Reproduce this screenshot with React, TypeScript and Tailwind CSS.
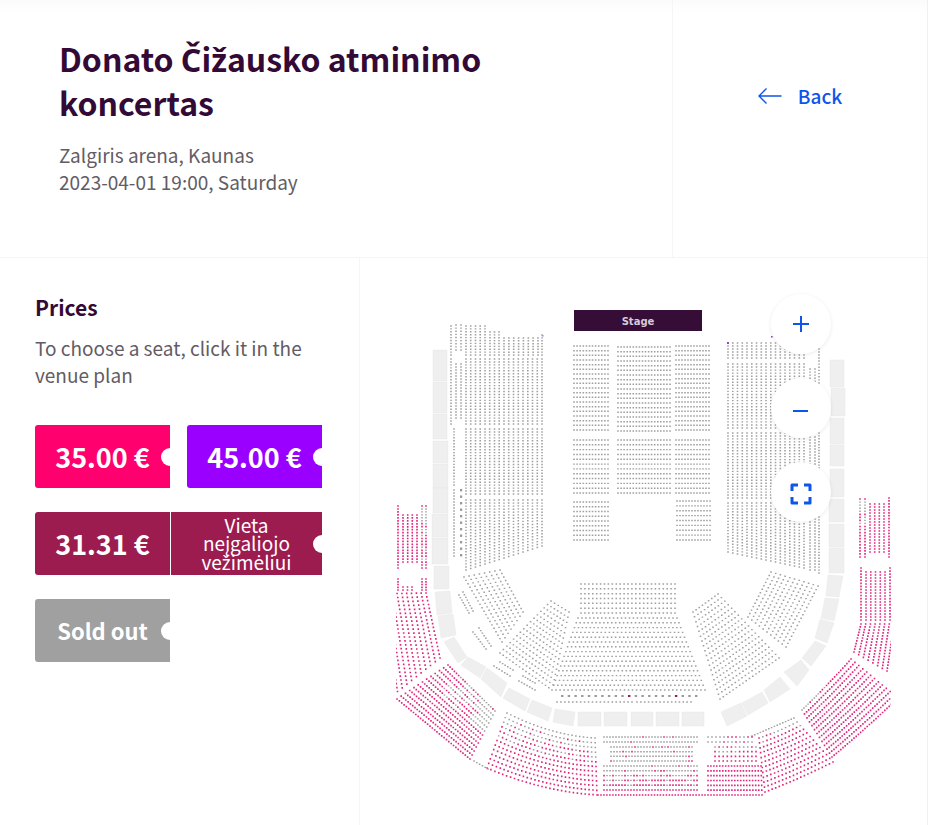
import type { ReactNode } from 'react';
import clsx from 'clsx';

type Point = [number, number];
type Tone = 'free' | 'taken';

interface Block {
    // first row of seats and last row of seats, the rest is interpolated
    first: [number, number, number, number];
    last?: [number, number, number, number];
    rows?: number;
    step?: number;
    sag?: number;
    // chance (0..1) that a seat is still available; u runs along the row, v across rows
    free?: (u: number, v: number) => number;
}

const FONT = "font-['Noto_Sans_CJK_SC','Noto_Sans',sans-serif]";

const always = () => 1;

// Vertical rows that share the same top and bottom
const columns = (x1: number, x2: number, top: number, bottom: number, rows: number, free?: Block['free']): Block => ({
    first: [x1, top, x1, bottom], last: [x2, top, x2, bottom], rows, step: 3, free,
});

const lines = (x1: number, x2: number, top: number, bottom: number, rows: number, step = 3, free?: Block['free']): Block => ({
    first: [x1, top, x2, top], last: [x1, bottom, x2, bottom], rows, step, free,
});

const BLOCKS: Block[] = [
    // floor, left side
    columns(451, 451, 326, 355, 1),
    columns(456, 461, 325, 350, 2),
    columns(466, 485, 326, 355, 5),
    columns(490, 499, 332, 355, 3),
    columns(504, 538, 338, 355, 8),
    columns(542, 542, 335, 355, 1),
    columns(451, 451, 359, 424, 1),
    columns(456, 461, 364, 418, 2),
    columns(466, 542, 359, 424, 17),
    columns(454, 454, 429, 485, 1),
    columns(466, 542, 429, 494, 17),
    columns(454, 454, 490, 556, 1),
    { first: [466, 500, 466, 570], last: [542, 500, 542, 546], rows: 17, step: 3 },

    // floor, centre
    lines(574, 608, 346, 430, 19),
    lines(618, 670, 347, 431, 19),
    lines(676, 709, 346, 430, 19),
    lines(574, 608, 440, 493, 12),
    lines(618, 670, 440, 493, 12),
    lines(676, 709, 440, 493, 12),
    lines(574, 608, 502, 540, 9),
    lines(677, 710, 501, 540, 9),

    // floor, right side
    columns(728, 804, 343, 358, 17),
    columns(819, 819, 349, 358, 1),
    columns(728, 804, 364, 428, 17),
    columns(810, 815, 369, 424, 2),
    columns(819, 819, 361, 383, 1),
    columns(728, 804, 433, 498, 17),
    columns(810, 815, 437, 494, 2),
    columns(819, 819, 433, 468, 1),
    { first: [728, 503, 728, 552], last: [804, 503, 804, 568], rows: 17, step: 3 },
    columns(810, 815, 504, 570, 2),
    columns(819, 819, 517, 573, 1),

    // amphitheatre
    lines(581, 675, 584, 613, 7, 4),
    { first: [578, 618, 677, 618], last: [552, 690, 705, 690], rows: 16, step: 4 },
    lines(557, 632, 702, 702, 1, 4),
    lines(637, 691, 702, 702, 1, 4),
    { first: [464, 577, 502, 642], last: [500, 570, 523, 612], rows: 8, step: 4 },
    { first: [459, 595, 469, 613], last: [463, 592, 473, 611], rows: 2, step: 3 },
    { first: [473, 632, 486, 649], last: [479, 628, 491, 646], rows: 2, step: 3 },
    { first: [551, 601, 569, 612], last: [500, 653, 552, 690], rows: 16, step: 4 },
    { first: [500, 662, 513, 670], last: [494, 666, 510, 676], rows: 2, step: 3 },
    { first: [523, 676, 535, 683], last: [519, 681, 535, 690], rows: 2, step: 3 },
    { first: [771, 572, 748, 617], last: [818, 586, 786, 647], rows: 11, step: 4 },
    { first: [693, 612, 718, 594], last: [720, 699, 779, 658], rows: 19, step: 4 },

    // balcony, left
    columns(398, 398, 506, 568, 1, always),
    columns(403, 417, 515, 562, 4, always),
    columns(422, 426, 506, 568, 2, (u) => (u < 0.5 ? 0.3 : 0.8)),
    columns(398, 398, 579, 590, 1, always),
    columns(403, 412, 587, 590, 3, always),
    columns(422, 426, 579, 590, 2, always),
    { first: [373, 594, 388, 699], last: [426, 593, 440, 658], rows: 12, step: 4, free: always },
    { first: [448, 665, 495, 711], last: [397, 699, 470, 759], rows: 13, step: 3, free: (u, v) => (u > 0.2 && v < 0.45 ? 0.95 - u * 0.8 : 1) },
    { first: [474, 761, 488, 769], step: 3, free: () => 0 },

    // balcony, bottom
    { first: [507, 713, 595, 738], last: [487, 768, 597, 795], rows: 13, step: 4, sag: 5, free: (u, v) => v * 2.2 - 0.1 },
    lines(604, 697, 737, 742, 2, 3, () => 0.08),
    lines(611, 692, 747, 761, 4, 3, () => 0.12),
    lines(604, 697, 766, 790, 6, 3, (u, v) => 0.1 + v),
    lines(598, 708, 795, 795, 1, 3, always),
    lines(708, 752, 737, 742, 2, 4, (u) => u * 0.7),
    lines(715, 756, 747, 761, 4, 4, (u, v) => 0.2 + u * 0.4 + v),
    { first: [708, 766, 761, 766], last: [708, 795, 762, 795], rows: 7, step: 3, free: always },
    { first: [752, 736, 794, 718], step: 3, free: () => 0.1 },
    { first: [759, 738, 797, 722], last: [765, 792, 833, 762], rows: 12, step: 4, sag: 1, free: (u, v) => v * 6 + 0.3 },

    // balcony, right
    columns(860, 865, 499, 557, 2, (u) => (u < 0.45 ? 0.35 : 1)),
    columns(870, 884, 504, 552, 4, always),
    columns(889, 889, 498, 557, 1, always),
    columns(861, 861, 568, 620, 1, always),
    columns(866, 885, 572, 620, 5, always),
    columns(890, 890, 568, 620, 1, always),
    { first: [861, 624, 854, 652], last: [894, 624, 887, 671], rows: 8, step: 3, free: always },
    { first: [802, 710, 851, 659], last: [832, 757, 898, 698], rows: 13, step: 3, sag: 1, free: (u, v) => (v < 0.05 && u < 0.5 ? 0.2 : 1) },
];

// Boxes between the floor and the balcony
const BOXES: Point[][] = [
    [[433, 350], [447, 350], [447, 381], [433, 381]],
    [[433, 382], [447, 382], [447, 413], [433, 413]],
    [[433, 414], [447, 414], [447, 439], [433, 439]],
    [[433, 441], [448, 441], [448, 463], [433, 463]],
    [[433, 464], [448, 464], [448, 488], [433, 488]],
    [[433, 488], [448, 488], [448, 513], [433, 513]],
    [[432, 514], [448, 514], [448, 537], [432, 537]],
    [[432, 538], [448, 538], [448, 564], [432, 564]],
    [[434, 566], [449, 566], [449, 589], [434, 589]],
    [[435, 592], [450, 591], [452, 613], [437, 615]],
    [[438, 616], [453, 614], [456, 635], [441, 638]],
    [[444, 642], [454, 637], [467, 657], [458, 663]],
    [[461, 665], [468, 657], [486, 667], [480, 678]],
    [[481, 679], [487, 668], [507, 683], [501, 697]],
    [[503, 698], [509, 688], [530, 699], [525, 711]],
    [[527, 712], [532, 700], [552, 708], [548, 721]],
    [[555, 709], [575, 712], [573, 726], [553, 722]],
    [[578, 712], [601, 712], [601, 726], [578, 726]],
    [[604, 712], [627, 712], [627, 726], [604, 726]],
    [[631, 712], [653, 712], [653, 726], [631, 726]],
    [[656, 712], [679, 712], [679, 726], [656, 726]],
    [[682, 712], [704, 712], [704, 726], [682, 726]],
    [[721, 712], [741, 703], [747, 716], [727, 726]],
    [[742, 703], [762, 692], [768, 703], [748, 715]],
    [[764, 690], [780, 677], [790, 689], [770, 702]],
    [[784, 672], [801, 660], [809, 670], [797, 686]],
    [[802, 658], [815, 641], [826, 646], [811, 666]],
    [[820, 619], [834, 623], [827, 643], [815, 638]],
    [[825, 598], [839, 599], [834, 621], [821, 618]],
    [[828, 575], [843, 576], [839, 597], [826, 596]],
    [[829, 548], [844, 548], [844, 573], [829, 573]],
    [[829, 524], [844, 524], [844, 547], [829, 547]],
    [[829, 499], [844, 499], [844, 522], [829, 522]],
    [[830, 469], [844, 469], [844, 497], [830, 497]],
    [[830, 445], [844, 445], [844, 466], [830, 466]],
    [[830, 418], [844, 418], [844, 444], [830, 444]],
    [[831, 388], [845, 388], [845, 416], [831, 416]],
    [[830, 360], [844, 360], [844, 387], [830, 387]],
];

// Cheap repeatable noise, so that the plan is the same on each render
const noise = (n: number) => {
    const s = Math.sin(n * 12.9898) * 43758.5453;
    return s - Math.floor(s);
};

function buildSeats(blocks: Block[]) {
    const paths: Record<Tone, string> = { free: '', taken: '' };
    let seed = 1;

    blocks.forEach(({ first, last = first, rows = 1, step = 3, sag = 0, free }) => {
        for (let r = 0; r < rows; r++) {
            const v = rows > 1 ? r / (rows - 1) : 0;
            const [x1, y1, x2, y2] = first.map((a, i) => a + (last[i] - a) * v);
            const count = Math.max(1, Math.round(Math.hypot(x2 - x1, y2 - y1) / step));
            for (let i = 0; i <= count; i++) {
                const u = i / count;
                const x = x1 + (x2 - x1) * u;
                const y = y1 + (y2 - y1) * u + sag * 4 * u * (1 - u);
                const tone: Tone = free && noise(seed++) < free(u, v) ? 'free' : 'taken';
                paths[tone] += `M${(x - 0.8).toFixed(1)} ${y.toFixed(1)}h1.6`;
            }
        }
    });

    return paths;
}

const SEATS = buildSeats(BLOCKS);

function SeatPlan() {
    const wheelchair = Array.from({ length: 21 }, (_, i) => 562 + i * 6.7);
    const sideSeats = Array.from({ length: 11 }, (_, i) => 490 + i * 6.5);

    return (
        <svg viewBox="360 258 567 567" className="block w-full" role="img" aria-label="Venue plan">
            <defs>
                <clipPath id="plan-area">
                    <rect x="396" y="300" width="495" height="505" />
                </clipPath>
            </defs>
            <rect x="574" y="310" width="128" height="21" fill="#350d36" />
            <text x="638" y="325" textAnchor="middle" fill="#d9c9da" fontSize="10" fontWeight="700" className="font-['DejaVu_Sans',sans-serif]">
                Stage
            </text>
            {BOXES.map((box, i) => (
                <polygon key={i} points={box.map(p => p.join(',')).join(' ')} fill="#efefef" stroke="#e6e6e6" strokeWidth="0.4" />
            ))}
            <g clipPath="url(#plan-area)">
                <path d={SEATS.taken} stroke="#a0a0a0" strokeWidth="1.4" />
                <path d={SEATS.free} stroke="#e0257c" strokeWidth="1.7" />
            </g>
            {wheelchair.map((x, i) => (
                <rect key={x} x={x - 1} y="695" width="2.4" height="2" fill={i === 10 || i === 17 ? '#a3174f' : '#999999'} />
            ))}
            {sideSeats.map(y => (
                <rect key={y} x="460" y={y - 1} width="2.2" height="2.4" fill="#999999" />
            ))}
            <rect x="727" y="342" width="2" height="2" fill="#9b3fd0" />
            <rect x="771" y="336" width="1.6" height="1.6" fill="#9b3fd0" />
            <rect x="542" y="335" width="1.6" height="1.6" fill="#b98bd0" />
        </svg>
    );
}

// The main family has no carons or ogoneks of its own, those letters come from Noto Sans
function Lithuanian({ text }: { text: string }) {
    return text.split(/(\s+|[ČčŽžŠšĖėĮįŲųŪūĄąĘę]+)/).map((part, i) =>
        i % 2 && part.trim() ? <span key={i} className="font-['Noto_Sans',sans-serif]">{part}</span> : part
    );
}

function Ticket({ color, label, note, small }: { color: string; label: string; note?: string; small?: boolean }) {
    return (
        <li className={clsx('relative flex h-[63px] overflow-hidden rounded-l-[3px] font-bold text-white', note ? 'col-span-2' : 'col-span-1', color)}>
            <span className={clsx('flex w-[135px] items-center justify-center', small ? 'text-[22px]' : 'text-[27px]')}>
                {label}
            </span>
            {note && (
                <span className="flex flex-1 items-center justify-center border-l border-white px-6 text-center text-[19px] leading-[18px] font-normal">
                    <span>
                        <Lithuanian text={note} />
                    </span>
                </span>
            )}
            <span className="absolute top-[23px] -right-[9px] size-[18px] rounded-full bg-white" />
        </li>
    );
}

function RoundButton({ label, children }: { label: string; children: ReactNode }) {
    return (
        <button
            type="button"
            aria-label={label}
            className="flex size-[60px] cursor-pointer items-center justify-center rounded-full bg-white text-[#0f55ea] shadow-[0_1px_4px_rgba(0,0,0,0.08)]"
        >
            {children}
        </button>
    );
}

export default function App() {
    return (
        <div className={`min-h-screen border-r border-[#f0f0f0] bg-white text-[19px] leading-[27px] text-[#625c65] ${FONT}`}>
            <header className="flex min-h-[258px] border-b border-[#f5f5f5] bg-linear-to-b from-[#fbfbfb] to-white to-[14px]">
                <div className="flex-1 border-r border-[#f5f5f5] py-[37px] pr-20 pl-[59px]">
                    <h1 className="max-w-[480px] text-[32px] leading-[43px] font-bold text-[#330a35]">
                        <Lithuanian text="Donato Čižausko atminimo koncertas" />
                    </h1>
                    <p className="mt-[17px]">
                        Zalgiris arena, Kaunas
                        <br />
                        2023-04-01 19:00, Saturday
                    </p>
                </div>
                <div className="flex w-[254px] justify-center pt-[82px]">
                    <a href="#back" className="flex h-7 items-center gap-4 font-medium text-[#0f55ea]">
                        <svg width="24" height="16" viewBox="0 0 24 16" fill="none" stroke="currentColor" strokeWidth="1.4">
                            <path d="M23.500 8H1M8.500 .5L1 8l7.500 7.500" />
                        </svg>
                        <span className="pb-0.5">Back</span>
                    </a>
                </div>
            </header>

            <main className="flex">
                <aside className="w-[360px] shrink-0 border-r border-[#f5f5f5] px-[35px] pt-[35px]">
                    <h2 className="text-[21px] leading-[28px] font-bold text-[#330a35]">Prices</h2>
                    <p className="mt-[13px]">To choose a seat, click it in the venue plan</p>
                    <ul className="mt-[37px] grid w-[287px] grid-cols-[135px_135px] gap-x-[17px] gap-y-6">
                        <Ticket color="bg-[#ff006e]" label="35.00 €" />
                        <Ticket color="bg-[#9900ff]" label="45.00 €" />
                        <Ticket color="bg-[#9c1c50]" label="31.31 €" note="Vieta neįgaliojo vežimėliui" />
                        <Ticket color="bg-[#a0a0a0]" label="Sold out" small />
                    </ul>
                </aside>

                <section className="relative min-w-0 flex-1">
                    <SeatPlan />
                    <div className="absolute top-9 right-24 flex flex-col gap-6">
                        <RoundButton label="Zoom in">
                            <svg width="16" height="16" viewBox="0 0 16 16" stroke="currentColor" strokeWidth="2">
                                <path d="M0 8h16M8 0v16" />
                            </svg>
                        </RoundButton>
                        <RoundButton label="Zoom out">
                            <svg width="16" height="16" viewBox="0 0 16 16" stroke="currentColor" strokeWidth="2">
                                <path d="M0 11h15" />
                            </svg>
                        </RoundButton>
                        <RoundButton label="Full screen">
                            <svg width="22" height="26" viewBox="0 0 22 26" fill="none" stroke="currentColor" strokeWidth="3" strokeLinejoin="round">
                                <path d="M2 12V6h6M14 6h6v6M20 18v6h-6M8 24H2v-6" />
                            </svg>
                        </RoundButton>
                    </div>
                </section>
            </main>
        </div>
    );
}
